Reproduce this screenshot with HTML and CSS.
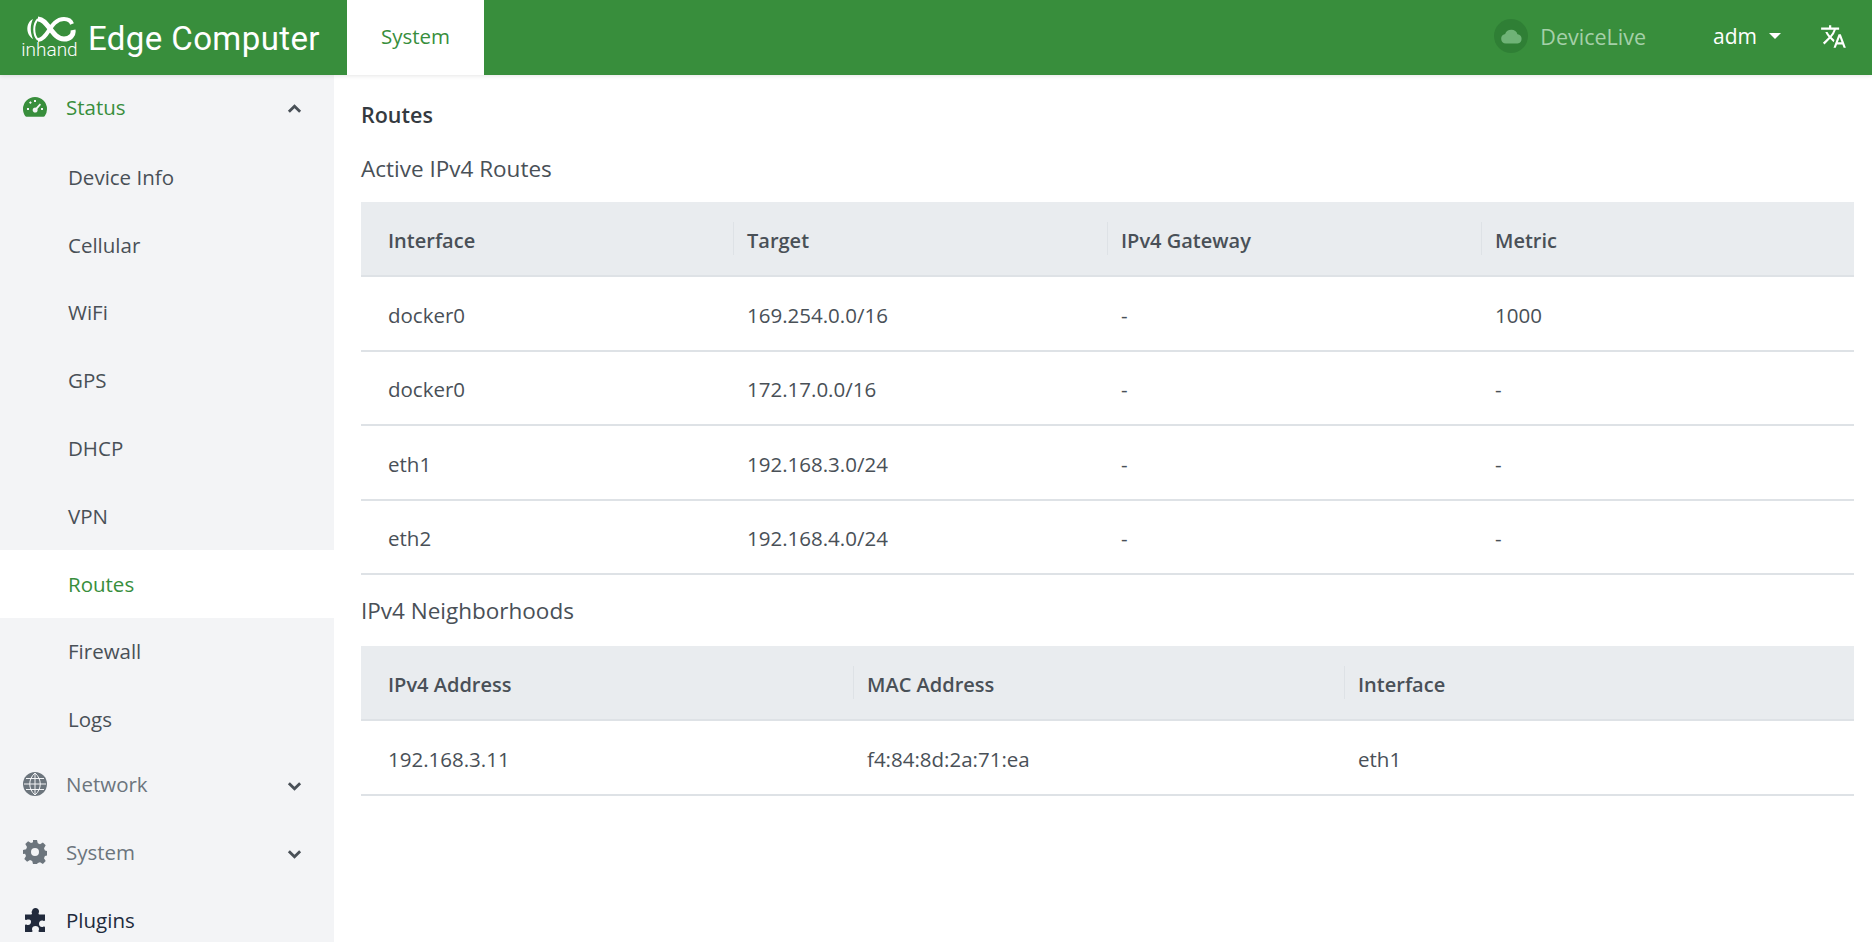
FILE: index.html
```html
<!DOCTYPE html>
<html lang="en">
  <head>
    <meta charset="utf-8" />
    <meta name="viewport" content="width=device-width, initial-scale=1" />
    <title>Edge Computer</title>
    <link rel="stylesheet" href="styles.css">
  </head>
  <body>
    <header class="topbar">
      <div class="brand">
        <div class="brand-logo">
          <svg class="brand-mark" viewBox="0 0 52 27" width="52" height="27">
            <path d="M9 3 C2 6 1 18 9 23 C6 16 6 9 9 3 Z" fill="#fff" />
            <path d="M14 3 C24 3 28 23 40 23 C46 23 50 19 49 14" fill="none" stroke="#fff" stroke-width="5" />
            <path d="M14 24 C24 24 26 3 40 3 C44 3 47 5 48 8" fill="none" stroke="#fff" stroke-width="4" />
            <path d="M14 3 C9 8 9 19 14 24" fill="none" stroke="#fff" stroke-width="2" />
          </svg>
          <span class="brand-inhand">inhand</span>
        </div>
        <span class="brand-name">Edge Computer</span>
      </div>
      <a class="top-tab">System</a>
      <div class="topbar-right">
        <span class="cloud-badge">
          <svg viewBox="0 0 24 16" width="23" height="15"><path d="M6 15.5 A5.2 5.2 0 0 1 5.2 5.2 A7 7 0 0 1 18.4 5.6 A5 5 0 0 1 18.5 15.5 Z" fill="#6fb377" /></svg>
        </span>
        <span class="devicelive">DeviceLive</span>
        <span class="user">adm<i class="caret"></i></span>
        <svg class="lang" viewBox="0 0 24 24" width="27" height="27"><path fill="#fff" d="M12.87 15.07l-2.54-2.51.03-.03A17.5 17.5 0 0 0 14.07 6H17V4h-7V2H8v2H1v2h11.17A15.7 15.7 0 0 1 9 11.35 15.7 15.7 0 0 1 6.69 8h-2c.73 1.63 1.73 3.17 2.98 4.56l-5.09 5.02L4 19l5-5 3.11 3.11.76-2.04zM18.5 10h-2L12 22h2l1.12-3h4.75L21 22h2l-4.5-12zm-2.62 7l1.62-4.33L19.12 17h-3.24z" /></svg>
      </div>
    </header>

    <div class="layout">
      <nav class="sidebar">
        <div class="nav-group nav-group-open">
          <svg class="nav-icon" viewBox="0 0 24 20"><path fill="#388e3c" d="M12 0A12 12 0 0 0 0 12c0 2.6.8 5 2.2 7 .3.5.8.7 1.3.7h17c.5 0 1-.2 1.3-.7A12 12 0 0 0 24 12 12 12 0 0 0 12 0z" /><path fill="#f3f4f6" d="M11 3h2v2h-2zM4 11h2v2H4zM18 11h2v2h-2zM6 5.500l1.500-1.300 1.300 1.500-1.500 1.300zM16.800 6.500l1.200 1.200-3.600 4.300a2.500 2.500 0 1 1-1.500-1.300z" /></svg>
          <span>Status</span>
          <svg class="chevron" viewBox="0 0 16 10"><path d="M2 8l6-6 6 6" /></svg>
        </div>
        <a class="nav-item">Device Info</a>
        <a class="nav-item">Cellular</a>
        <a class="nav-item">WiFi</a>
        <a class="nav-item">GPS</a>
        <a class="nav-item">DHCP</a>
        <a class="nav-item">VPN</a>
        <a class="nav-item nav-item-active">Routes</a>
        <a class="nav-item">Firewall</a>
        <a class="nav-item">Logs</a>
        <div class="nav-group">
          <svg class="nav-icon" viewBox="0 0 24 24"><circle cx="12" cy="12" r="12" fill="#6c757d" /><path d="M12 1v22M1 12h22M3 6.500h18M3 17.500h18M12 1C5 7 5 17 12 23M12 1c7 6 7 16 0 22" fill="none" stroke="#f3f4f6" stroke-width="1" /></svg>
          <span>Network</span>
          <svg class="chevron" viewBox="0 0 16 10"><path d="M2 2l6 6 6-6" /></svg>
        </div>
        <div class="nav-group">
          <svg class="nav-icon" viewBox="0 0 24 24"><path fill="#6c757d" fill-rule="evenodd" d="M10 0h4l.8 3.300 2.200.9 2.900-1.700 2.800 2.800-1.700 2.900.9 2.200 3.100.8v4l-3.100.8-.9 2.200 1.700 2.900-2.800 2.800-2.900-1.700-2.200.9L14 24h-4l-.8-3.100-2.200-.9-2.900 1.700-2.800-2.800 1.700-2.900-.9-2.200L0 14v-4l3.100-.8.900-2.200-1.700-2.900 2.800-2.800L8 3l2-.7zM12 8a4 4 0 1 0 0 8 4 4 0 0 0 0-8z" /></svg>
          <span>System</span>
          <svg class="chevron" viewBox="0 0 16 10"><path d="M2 2l6 6 6-6" /></svg>
        </div>
        <div class="nav-group nav-group-dark">
          <svg class="nav-icon" viewBox="0 0 24 24"><path fill="#212a3c" d="M9 3.500C9 1.500 10.500 0 12.500 0S16 1.500 16 3.500c0 1-.5 1.500-.5 2.200 0 .5.400.8 1 .8H22v5.500c0 .6-.3 1-.8 1-.7 0-1.200-.5-2.200-.5-2 0-3 1.500-3 3.200s1 3.300 3 3.300c1 0 1.500-.5 2.200-.5.500 0 .8.400.8 1V24h-5.500c-.6 0-1-.3-1-.8 0-.7.500-1.200.5-2.200 0-2-1.500-3-3.500-3s-3.500 1-3.500 3c0 1 .5 1.500.5 2.200 0 .5-.4.800-1 .8H2v-6.500c0-.6.300-1 .8-1 .7 0 1.200.5 2.200.5 2 0 3-1.500 3-3.300S7 11.500 5 11.500c-1 0-1.500.5-2.200.5-.5 0-.8-.4-.8-1V6.500h6c.6 0 1-.3 1-.8 0-.7-.5-1.200-.5-2.200z" /></svg>
          <span>Plugins</span>
        </div>
      </nav>

      <main class="content">
        <h1 class="page-title">Routes</h1>
        <h2 class="section-title">Active IPv4 Routes</h2>
        <table class="data-table routes-table">
          <thead>
            <tr><th>Interface</th><th>Target</th><th>IPv4 Gateway</th><th>Metric</th></tr>
          </thead>
          <tbody>
            <tr><td>docker0</td><td>169.254.0.0/16</td><td>-</td><td>1000</td></tr>
            <tr><td>docker0</td><td>172.17.0.0/16</td><td>-</td><td>-</td></tr>
            <tr><td>eth1</td><td>192.168.3.0/24</td><td>-</td><td>-</td></tr>
            <tr><td>eth2</td><td>192.168.4.0/24</td><td>-</td><td>-</td></tr>
          </tbody>
        </table>
        <h2 class="section-title section-title-second">IPv4 Neighborhoods</h2>
        <table class="data-table neighbors-table">
          <thead>
            <tr><th>IPv4 Address</th><th>MAC Address</th><th>Interface</th></tr>
          </thead>
          <tbody>
            <tr><td>192.168.3.11</td><td>f4:84:8d:2a:71:ea</td><td>eth1</td></tr>
          </tbody>
        </table>
      </main>
    </div>
  </body>
</html>
```

FILE: styles.css
```css
html, body {
  margin: 0;
  height: 100%;
  overflow: hidden;
}

body {
  font-family: "Open Sans", "Noto Sans", sans-serif;
  font-size: 20.5px;
  color: #495057;
  background: #fff;
}

.topbar {
  position: relative;
  display: flex;
  align-items: stretch;
  height: 75px;
  background-color: #388e3c;
  color: #fff;
  box-shadow: 0 1px 4px rgba(0, 0, 0, 0.1);
}

.brand {
  display: flex;
  align-items: center;
  gap: 9px;
  width: 347px;
  padding-left: 20px;
  box-sizing: border-box;
}

.brand-logo {
  display: flex;
  flex-direction: column;
  align-items: center;
  width: 59px;
}

.brand-mark {
  margin-bottom: -3px;
}

.brand-inhand {
  font-family: "Roboto", sans-serif;
  font-size: 19px;
  font-weight: 300;
  line-height: 19px;
}

.brand-name {
  padding-top: 2px;
  font-family: "Roboto", sans-serif;
  font-size: 33px;
  letter-spacing: 0.4px;
  white-space: nowrap;
}

.top-tab {
  display: flex;
  align-items: center;
  justify-content: center;
  width: 137px;
  padding-bottom: 3px;
  box-sizing: border-box;
  background: #fff;
  color: #388e3c;
  font-size: 20.5px;
}

.topbar-right {
  display: flex;
  align-items: center;
  margin-left: auto;
  padding-right: 25px;
  padding-bottom: 3px;
}

.cloud-badge {
  display: flex;
  align-items: center;
  justify-content: center;
  width: 34px;
  height: 34px;
  border-radius: 50%;
  background: #2f7f35;
}

.devicelive {
  margin-left: 12px;
  font-size: 21.5px;
  color: #a5d0a9;
}

.user {
  display: flex;
  align-items: center;
  margin-left: 67px;
  font-size: 21px;
}

.caret {
  width: 0;
  height: 0;
  margin-left: 12px;
  border-left: 6px solid transparent;
  border-right: 6px solid transparent;
  border-top: 6px solid #fff;
}

.lang {
  margin-left: 39px;
}

.layout {
  display: flex;
  height: 867px;
}

.sidebar {
  display: flex;
  flex-direction: column;
  flex: none;
  width: 334px;
  background: #f3f4f6;
  overflow: hidden;
}

.nav-group {
  display: flex;
  align-items: center;
  flex: none;
  height: 68px;
  padding: 0 32px 0 23px;
  color: #6c757d;
}

.nav-group-open {
  height: 66px;
  margin: -1px 0 3px;
  color: #388e3c;
}

.nav-group-dark {
  color: #212a3c;
}

.nav-item + .nav-group {
  margin-top: -3px;
}

.nav-icon {
  flex: none;
  width: 24px;
  height: 24px;
  margin-right: 19px;
}

.chevron {
  width: 15px;
  height: 10px;
  margin-top: 4px;
  margin-left: auto;
  fill: none;
  stroke: #495057;
  stroke-width: 3;
}

.nav-item {
  display: flex;
  align-items: center;
  flex: none;
  height: 67.800px;
  padding-left: 68px;
  color: #495057;
}

.nav-item-active {
  background: #fff;
  color: #388e3c;
}

.content {
  flex: 1;
  padding: 0 18px 0 27px;
}

.page-title {
  margin: 25px 0 0;
  font-size: 21.500px;
  font-weight: 600;
  line-height: 30px;
  color: #343a40;
}

.section-title {
  margin: 24px 0 0;
  font-size: 22.500px;
  font-weight: 400;
  line-height: 30px;
}

.section-title-second {
  margin-top: 21px;
}

.data-table {
  width: 100%;
  margin-top: 18px;
  table-layout: fixed;
  border-collapse: collapse;
}

.section-title-second + .data-table {
  margin-top: 20px;
}

.data-table th {
  position: relative;
  box-sizing: border-box;
  height: 74px;
  padding: 3px 14px 0;
  background: #e9ecef;
  border-bottom: 2px solid #dee2e6;
  text-align: left;
  font-size: 20px;
  font-weight: 600;
}

.data-table th + th::before {
  content: "";
  position: absolute;
  left: 0;
  top: 20px;
  bottom: 20px;
  width: 1px;
  background: #dee2e6;
}

.data-table td {
  box-sizing: border-box;
  height: 74.500px;
  padding: 3px 14px 0;
  border-bottom: 2px solid #dee2e6;
}

.data-table th:first-child,
.data-table td:first-child {
  padding-left: 27px;
}

.routes-table th:nth-child(1) {
  width: 372px;
}

.routes-table th:nth-child(2),
.routes-table th:nth-child(3) {
  width: 374px;
}

.neighbors-table th:nth-child(1) {
  width: 492px;
}

.neighbors-table th:nth-child(2) {
  width: 491px;
}
```
